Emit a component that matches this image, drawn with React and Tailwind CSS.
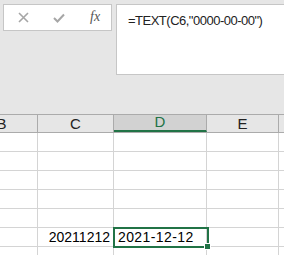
const GREEN = '#217346'

const cols = [
  { key: 'B', w: 'w-[72px] -ml-[34px]' },
  { key: 'C', w: 'w-[76px]' },
  { key: 'D', w: 'w-[93px]' },
  { key: 'E', w: 'w-[72px]' },
  { key: 'F', w: 'w-[72px]' },
]

function Row({ last }) {
  return (
    <div className="flex h-[19px] bg-white border-b border-[#d4d4d4]">
      {cols.map(c => (
        <div key={c.key} className={`${c.w} shrink-0 border-r border-[#d4d4d4] h-full flex items-center text-[14px] text-black`}>
          {last && c.key === 'C' && <span className="w-full text-right pr-[3px] pt-[1px]">20211212</span>}
          {last && c.key === 'D' && <span className="pl-[4px] pt-[1px] tracking-[0.4px]">2021-12-12</span>}
        </div>
      ))}
    </div>
  )
}

export default function App() {
  return (
    <div className="relative w-[284px] h-[255px] overflow-hidden bg-[#e6e6e6]" style={{ fontFamily: '"Liberation Sans", Arial, sans-serif' }}>
      {/* formula bar */}
      <div className="h-[114px] flex items-start pt-[4px] pl-[3px] gap-[4px]">
        <div className="w-[109px] h-[27px] shrink-0 bg-white border border-[#c6c6c6] flex items-center">
          <svg className="ml-[14px]" width="11" height="11" viewBox="0 0 11 11">
            <path d="M1 1L10 10M10 1L1 10" stroke="#a6a6a6" strokeWidth="1.6" fill="none" />
          </svg>
          <svg className="ml-[24px]" width="12" height="10" viewBox="0 0 12 10">
            <path d="M1 5L4.5 8.5L11 1.5" stroke="#a6a6a6" strokeWidth="2" fill="none" />
          </svg>
          <span className="ml-[25px] -mt-[2px] text-[14px] italic text-[#555]" style={{ fontFamily: '"Liberation Serif", serif' }}>
            fx
          </span>
        </div>
        <div className="w-[175px] h-[71px] shrink-0 bg-white border border-[#c6c6c6] pl-[11px] pt-[6px] text-[13px] text-[#222] tracking-[-0.5px]">
          =TEXT(C6,"0000-00-00")
        </div>
      </div>

      {/* column headers */}
      <div className="flex h-[19px] border-t border-[#ababab] border-b border-b-[#ababab]">
        {cols.map(c => (
          <div
            key={c.key}
            className={`${c.w} shrink-0 h-full border-r border-[#ababab] flex items-end justify-center text-[15px] leading-[15px] pb-[1px] ${
              c.key === 'D' ? 'bg-[#d2d2d2] text-[#217346] border-b-2 border-b-[#217346]' : 'bg-[#e6e6e6] text-[#222]'
            }`}
          >
            {c.key !== 'F' && c.key}
          </div>
        ))}
      </div>

      {[0, 1, 2, 3, 4, 5, 6].map(i => (
        <Row key={i} last={i === 5} />
      ))}

      {/* active cell */}
      <div className="absolute left-[113px] top-[227px] w-[96px] h-[21px] border-2" style={{ borderColor: GREEN }} />
      <div className="absolute left-[204px] top-[243px] w-[7px] h-[7px] border border-white" style={{ background: GREEN }} />
    </div>
  )
}
